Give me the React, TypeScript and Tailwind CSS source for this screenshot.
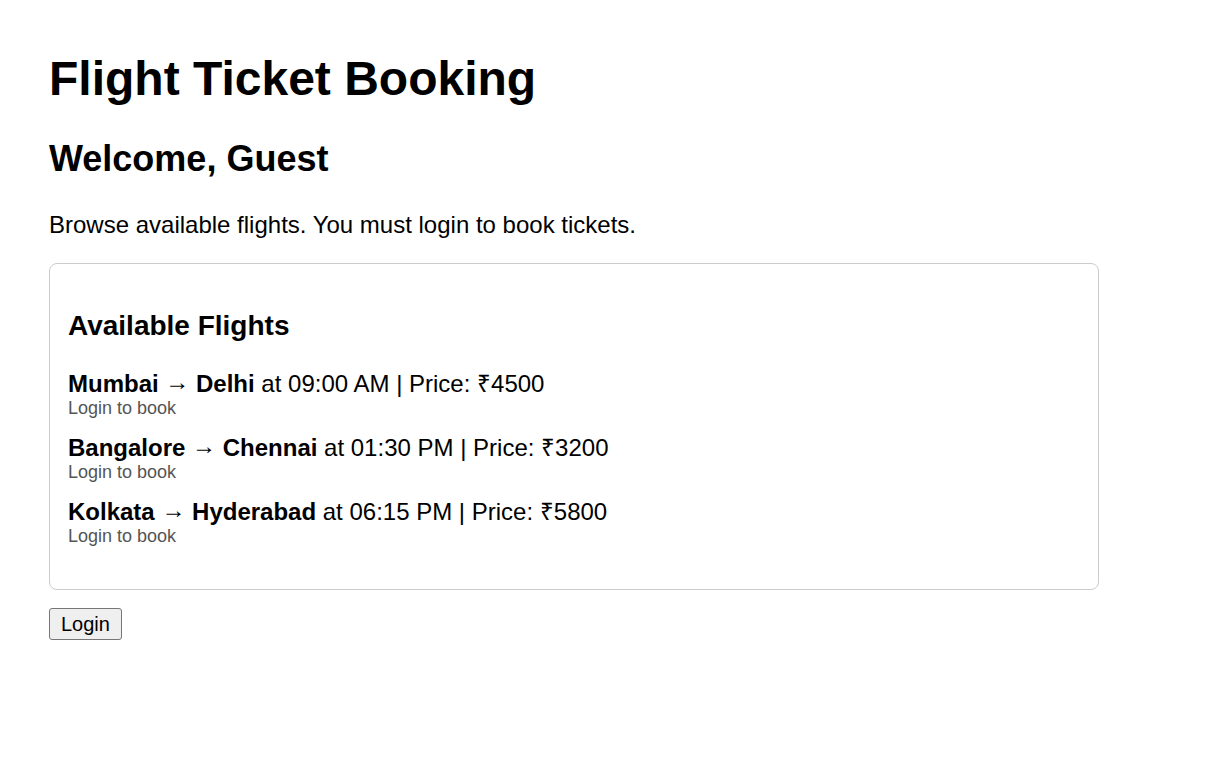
import React from "react";

const flights = [
  { from: "Mumbai", to: "Delhi", time: "09:00 AM", price: "4500" },
  { from: "Bangalore", to: "Chennai", time: "01:30 PM", price: "3200" },
  { from: "Kolkata", to: "Hyderabad", time: "06:15 PM", price: "5800" },
];

export default function App() {
  return (
    <div
      className="min-h-[771px] bg-white text-black px-[49px] pt-[51px]"
      style={{ fontFamily: '"Liberation Sans", Arial, sans-serif' }}
    >
      <h1 className="text-[48px] font-bold leading-[normal] mb-[32px]">Flight Ticket Booking</h1>
      <h2 className="text-[36px] font-bold leading-[normal] mb-[31px]">Welcome, Guest</h2>
      <p className="text-[24px] leading-[normal] mb-[24px]">
        Browse available flights. You must login to book tickets.
      </p>
      <div className="w-[1050px] border border-[#cccccc] rounded-[8px] px-[18px] pt-[46px] pb-[42px]">
        <h3 className="text-[28px] font-bold leading-[normal] mb-[28px]">Available Flights</h3>
        <div className="flex flex-col gap-[15px]">
          {flights.map((f) => (
            <div key={f.from} className="flex flex-col">
              <div className="text-[24px] leading-[28px] h-[28px] whitespace-nowrap">
                <b>{f.from}</b> <span className="align-[2px] leading-[0]">→</span> <b>{f.to}</b> at {f.time} | Price: ₹{f.price}
              </div>
              <div className="text-[18px] leading-[21px] h-[21px] text-[#555555]">Login to book</div>
            </div>
          ))}
        </div>
      </div>
      <button className="mt-[18px] h-[32px] px-[11px] text-[20px] leading-[normal] bg-[#efefef] border border-[#767676] rounded-[3px] text-black">
        Login
      </button>
    </div>
  );
}
